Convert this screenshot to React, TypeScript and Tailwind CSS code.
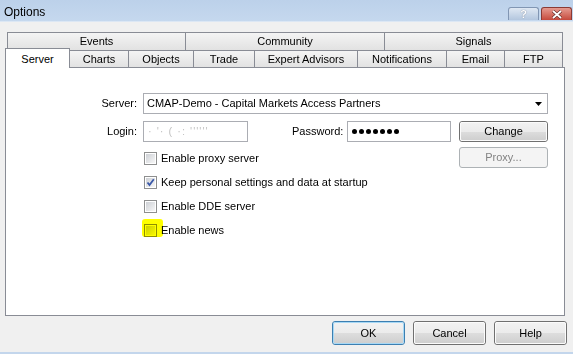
import React from "react";

function Tab({ children, className }: { children: React.ReactNode; className: string }) {
  return (
    <div
      className={
        "h-full flex items-center justify-center border-t border-r border-[#898c95] bg-gradient-to-b from-[#f4f4f4] to-[#e2e2e2] " +
        className
      }
    >
      {children}
    </div>
  );
}

function Checkbox({ checked }: { checked?: boolean }) {
  return (
    <div className="w-[13px] h-[13px] border border-[#8e8f8f] bg-white p-[1px] shrink-0">
      <div className="w-full h-full bg-gradient-to-br from-[#cdd0d5] to-[#f7f7f7] relative">
        {checked && (
          <svg viewBox="0 0 9 9" className="absolute inset-0 w-[9px] h-[9px]">
            <path d="M1.5 4.5 L3.5 7 L7.8 1.2" fill="none" stroke="#3a58a8" strokeWidth="1.8" />
          </svg>
        )}
      </div>
    </div>
  );
}

function WinButton({
  children,
  className,
  disabled,
  isDefault,
}: {
  children: React.ReactNode;
  className: string;
  disabled?: boolean;
  isDefault?: boolean;
}) {
  if (disabled) {
    return (
      <div
        className={
          "flex items-center justify-center rounded-[3px] border border-[#adb2b5] bg-[#f4f4f4] text-[#838383] " +
          className
        }
      >
        {children}
      </div>
    );
  }
  return (
    <div
      className={
        "flex items-center justify-center rounded-[3px] border " +
        (isDefault ? "border-[#3c7fb1] " : "border-[#707070] ") +
        className
      }
    >
      <div
        className={
          "w-full h-full rounded-[2px] border flex items-center justify-center bg-[linear-gradient(#f2f2f2_0%,#ebebeb_50%,#dddddd_51%,#cfcfcf_100%)] " +
          (isDefault ? "border-[#a7d8f5]" : "border-[#fbfbfb]")
        }
      >
        {children}
      </div>
    </div>
  );
}

export default function App() {
  return (
    <div className="w-[573px] h-[354px] overflow-hidden bg-[#f0f0f0] flex flex-col font-['Liberation_Sans',Arial,sans-serif] text-[11px] text-black">
      {/* Title bar */}
      <div className="h-[21px] shrink-0 flex items-start justify-between bg-gradient-to-b from-[#bcd1ea] to-[#c5d8ee] pl-[4px] pr-[1px]">
        <div className="text-[12px] leading-[14px] mt-[5px] text-black">Options</div>
        <div className="flex gap-[2px] mt-[7px]">
          <div className="w-[31px] h-[13px] rounded-t-[3px] border border-b-0 border-[#8196b3] bg-gradient-to-b from-[#dfe8f3] to-[#b3c6de] flex items-center justify-center text-[11px] leading-none font-bold text-white [text-shadow:0_0_1px_#50607a]">
            ?
          </div>
          <div className="w-[31px] h-[13px] rounded-t-[3px] border border-b-0 border-[#8a3a34] bg-gradient-to-b from-[#e49a90] to-[#c5483c] flex items-center justify-center">
            <svg viewBox="0 0 12 9" className="w-[12px] h-[9px]">
              <path d="M2 1 L10 8 M10 1 L2 8" stroke="#5a2420" strokeWidth="3" />
              <path d="M2 1 L10 8 M10 1 L2 8" stroke="#ffffff" strokeWidth="1.8" />
            </svg>
          </div>
        </div>
      </div>
      <div className="h-px bg-[#dce7f4] shrink-0" />

      {/* Body */}
      <div className="flex-1 flex flex-col px-[5px] pt-[10px]">
        {/* Tabs row 1 */}
        <div className="flex h-[18px] ml-[2px]">
          <Tab className="w-[179px] border-l">Events</Tab>
          <Tab className="w-[199px]">Community</Tab>
          <Tab className="w-[178px]">Signals</Tab>
        </div>
        {/* Tabs row 2 */}
        <div className="flex h-[17px] items-start">
          <div className="relative z-10 w-[65px] h-[20px] -mt-[2px] border-t border-l border-r border-[#898c95] bg-white flex items-start justify-center pt-[2px]">
            Server
          </div>
          <Tab className="w-[59px]">Charts</Tab>
          <Tab className="w-[65px]">Objects</Tab>
          <Tab className="w-[61px]">Trade</Tab>
          <Tab className="w-[103px]">Expert Advisors</Tab>
          <Tab className="w-[89px]">Notifications</Tab>
          <Tab className="w-[58px]">Email</Tab>
          <Tab className="w-[58px]">FTP</Tab>
        </div>

        {/* Panel */}
        <div className="w-[560px] h-[249px] border border-[#898c95] bg-white pt-[25px]">
          {/* Server row */}
          <div className="flex items-center h-[21px]">
            <div className="w-[131px] text-right mr-[6px]">Server:</div>
            <div className="w-[405px] h-[21px] border border-[#abadb3] flex items-center justify-between pl-[3px] pr-[5px]">
              <span>CMAP-Demo - Capital Markets Access Partners</span>
              <svg viewBox="0 0 7 4" className="w-[7px] h-[4px]">
                <path d="M0 0 H7 L3.5 4 Z" fill="#000" />
              </svg>
            </div>
          </div>
          {/* Login row */}
          <div className="flex items-center h-[21px] mt-[7px]">
            <div className="w-[131px] text-right mr-[6px]">Login:</div>
            <div className="w-[105px] h-[21px] border border-[#abadb3] flex items-center pl-[4px] text-[#c4c4c4] tracking-[1px]">
              · '· ( ·: ''''''
            </div>
            <div className="ml-[44px] w-[50px]">Password:</div>
            <div className="ml-[5px] w-[104px] h-[21px] border border-[#abadb3] flex items-center gap-[2px] pl-[4px]">
              {[0, 1, 2, 3, 4, 5, 6].map((i) => (
                <span key={i} className="w-[5px] h-[5px] rounded-full bg-black" />
              ))}
            </div>
            <WinButton className="ml-[8px] w-[89px] h-[21px]">Change</WinButton>
          </div>
          {/* Checkboxes + Proxy */}
          <div className="flex mt-[4px]">
            <div className="flex flex-col ml-[138px]">
              <div className="h-[24px] flex items-center gap-[4px]">
                <Checkbox />
                <span>Enable proxy server</span>
              </div>
              <div className="h-[24px] flex items-center gap-[4px]">
                <Checkbox checked />
                <span>Keep personal settings and data at startup</span>
              </div>
              <div className="h-[24px] flex items-center gap-[4px]">
                <Checkbox />
                <span>Enable DDE server</span>
              </div>
              <div className="h-[24px] flex items-center gap-[4px]">
                <div className="relative">
                  <Checkbox />
                  <div className="absolute -left-[2px] -top-[5px] w-[21px] h-[18px] rounded-[3px] bg-[#ffff00] mix-blend-multiply blur-[0.5px]" />
                </div>
                <span>Enable news</span>
              </div>
            </div>
            <div className="ml-auto mr-[16px] mt-[1px]">
              <WinButton disabled className="w-[89px] h-[21px]">
                Proxy...
              </WinButton>
            </div>
          </div>
        </div>

        {/* Bottom buttons */}
        <div className="flex justify-end gap-[8px] mt-[5px] pr-[1px]">
          <WinButton isDefault className="w-[73px] h-[24px]">OK</WinButton>
          <WinButton className="w-[73px] h-[24px]">Cancel</WinButton>
          <WinButton className="w-[73px] h-[24px]">Help</WinButton>
        </div>
      </div>
      <div className="h-[2px] bg-[#c3d6ec] shrink-0" />
    </div>
  );
}
